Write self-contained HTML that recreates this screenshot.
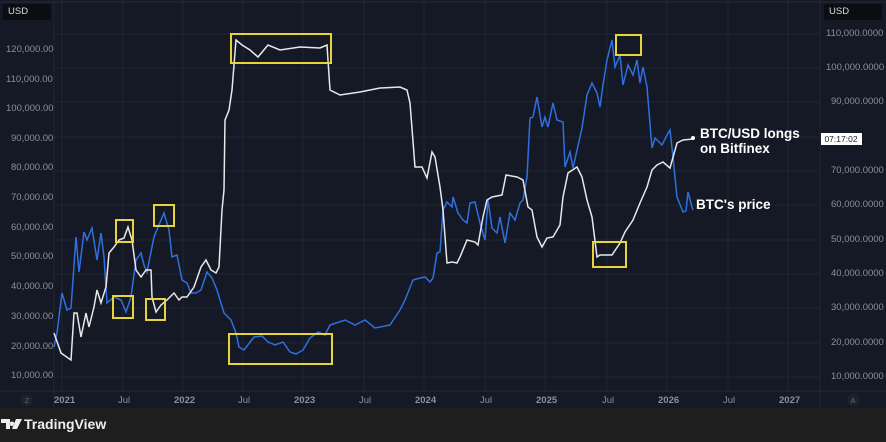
<!DOCTYPE html>
<html><head><style>
body{margin:0;width:886px;height:442px;overflow:hidden;background:#131722;font-family:"Liberation Sans",sans-serif;}
.wrap{position:relative;width:886px;height:442px;background:#141925}
.l{position:absolute;font-size:9.5px;color:#8c909b}
.foot{position:absolute;left:0;top:408px;width:886px;height:34px;background:#1e1e1e}
</style></head><body><div class="wrap">
<svg width="886" height="408" style="position:absolute;left:0;top:0">
<rect x="0" y="0" width="886" height="408" fill="#141925"/>
<g stroke="#1f2533" stroke-width="1">
<line x1="54" y1="0" x2="54" y2="408"/><line x1="820" y1="0" x2="820" y2="408"/>
<line x1="62" y1="0" x2="62" y2="391"/><line x1="123" y1="0" x2="123" y2="391"/><line x1="183" y1="0" x2="183" y2="391"/><line x1="243" y1="0" x2="243" y2="391"/><line x1="303" y1="0" x2="303" y2="391"/><line x1="364" y1="0" x2="364" y2="391"/><line x1="424" y1="0" x2="424" y2="391"/><line x1="485" y1="0" x2="485" y2="391"/><line x1="545" y1="0" x2="545" y2="391"/><line x1="607" y1="0" x2="607" y2="391"/><line x1="667" y1="0" x2="667" y2="391"/><line x1="728" y1="0" x2="728" y2="391"/><line x1="788" y1="0" x2="788" y2="391"/>
<line x1="54" y1="34" x2="820" y2="34"/><line x1="54" y1="68" x2="820" y2="68"/><line x1="54" y1="102" x2="820" y2="102"/><line x1="54" y1="137" x2="820" y2="137"/><line x1="54" y1="171" x2="820" y2="171"/><line x1="54" y1="205" x2="820" y2="205"/><line x1="54" y1="240" x2="820" y2="240"/><line x1="54" y1="274" x2="820" y2="274"/><line x1="54" y1="308" x2="820" y2="308"/><line x1="54" y1="343" x2="820" y2="343"/><line x1="54" y1="377" x2="820" y2="377"/>
<line x1="0" y1="391" x2="886" y2="391" stroke="#262b38"/>
<line x1="0" y1="2" x2="886" y2="2" stroke="#262b38"/>
</g>
<polyline fill="none" stroke="#2f6fe0" stroke-width="1.5" points="54,347 57,333 62,293 67,310 71,308 76,237 79,272 84,232 87,240 92,228 97,260 101,233 104,257 107,303 114,297 121,300 126,312 131,297 136,260 141,253 144,265 147,272 154,237 161,220 164,213 169,230 172,257 177,255 182,280 187,283 191,293 196,293 201,290 207,272 212,278 217,290 224,313 231,320 236,333 239,347 244,350 254,337 262,336 268,342 275,345 283,342 290,352 296,354 303,350 310,338 318,332 325,335 330,325 345,320 355,325 365,320 375,328 390,325 400,310 405,300 413,280 420,278 425,277 430,282 433,278 437,253 440,252 443,210 447,202 452,207 453,197 458,213 463,220 467,223 470,203 475,202 480,223 485,240 488,200 492,228 497,233 500,217 505,243 510,213 515,220 520,203 523,200 527,177 530,118 533,117 537,97 542,127 545,117 548,127 553,103 557,120 563,122 565,167 570,152 573,168 582,128 587,95 592,83 597,93 600,107 603,85 607,60 612,40 615,67 620,55 623,85 628,65 633,75 637,60 640,83 643,67 647,87 652,148 655,138 662,145 667,135 670,130 673,157 677,197 683,212 686,211 688,192 692,207 693,210"/>
<polyline fill="none" stroke="#e8e8ea" stroke-width="1.5" points="54,333 61,353 71,360 74,313 77,313 81,337 86,313 89,327 94,307 97,290 101,303 106,287 109,253 114,247 119,240 124,238 128,227 132,240 136,270 141,277 146,270 151,270 152,297 156,312 161,305 167,300 174,293 179,300 182,297 187,297 194,287 201,267 206,260 211,270 216,273 219,267 222,210 224,190 225,120 229,110 232,90 236,40 242,45 250,50 258,57 268,45 280,50 300,47 320,48 327,45 330,90 340,95 360,92 380,88 400,87 407,90 410,103 415,167 422,167 427,178 432,152 435,157 440,187 443,210 447,263 452,262 457,263 460,257 467,240 475,242 478,245 483,217 487,200 492,197 502,195 506,175 517,177 523,180 528,207 532,210 537,237 542,247 547,238 553,237 560,225 563,197 568,173 577,167 582,177 587,200 592,217 597,257 600,255 612,255 620,243 625,232 633,220 640,203 647,187 652,170 657,165 663,162 670,168 677,143 683,140 693,139"/>
<circle cx="693" cy="138" r="2" fill="#fff"/>
<g fill="none" stroke="#e8d43a" stroke-width="2">
<rect x="231" y="34" width="100" height="29"/><rect x="229" y="334" width="103" height="30"/>
<rect x="116" y="220" width="17" height="22"/><rect x="113" y="296" width="20" height="22"/>
<rect x="154" y="205" width="20" height="21"/><rect x="146" y="299" width="19" height="21"/>
<rect x="593" y="242" width="33" height="25"/><rect x="616" y="35" width="25" height="20"/>
</g>
<rect x="3" y="4" width="48" height="16" rx="2" fill="#0b0d12"/>
<rect x="824" y="4" width="58" height="16" rx="2" fill="#0b0d12"/>
<circle cx="27" cy="400" r="6" fill="#1e222b"/><circle cx="853" cy="400" r="6" fill="#1e222b"/>
<text x="27" y="403" font-size="7" fill="#666" text-anchor="middle">Z</text>
<text x="853" y="403" font-size="7" fill="#666" text-anchor="middle">A</text>
<rect x="821" y="133" width="41" height="12" fill="#fff"/>
<text x="841" y="142" font-size="8.5" fill="#222" text-anchor="middle" font-family="Liberation Sans">07:17:02</text>
</svg>
<div class="l" style="left:8px;top:6px;color:#ddd">USD</div>
<div class="l" style="left:829px;top:6px;color:#ddd">USD</div>
<div class="l" style="left:6px;top:44px">120,000.00</div>
<div class="l" style="left:6px;top:74px">110,000.00</div>
<div class="l" style="left:6px;top:103px">100,000.00</div>
<div class="l" style="left:11px;top:133px">90,000.00</div>
<div class="l" style="left:11px;top:162px">80,000.00</div>
<div class="l" style="left:11px;top:192px">70,000.00</div>
<div class="l" style="left:11px;top:222px">60,000.00</div>
<div class="l" style="left:11px;top:251px">50,000.00</div>
<div class="l" style="left:11px;top:281px">40,000.00</div>
<div class="l" style="left:11px;top:311px">30,000.00</div>
<div class="l" style="left:11px;top:341px">20,000.00</div>
<div class="l" style="left:11px;top:370px">10,000.00</div>
<div class="l" style="left:826px;top:28px">110,000.0000</div>
<div class="l" style="left:826px;top:62px">100,000.0000</div>
<div class="l" style="left:831px;top:96px">90,000.0000</div>
<div class="l" style="left:831px;top:165px">70,000.0000</div>
<div class="l" style="left:831px;top:199px">60,000.0000</div>
<div class="l" style="left:831px;top:234px">50,000.0000</div>
<div class="l" style="left:831px;top:268px">40,000.0000</div>
<div class="l" style="left:831px;top:302px">30,000.0000</div>
<div class="l" style="left:831px;top:337px">20,000.0000</div>
<div class="l" style="left:831px;top:371px">10,000.0000</div>
<div class="l" style="left:54px;top:395px;font-weight:bold">2021</div>
<div class="l" style="left:118px;top:395px">Jul</div>
<div class="l" style="left:174px;top:395px;font-weight:bold">2022</div>
<div class="l" style="left:238px;top:395px">Jul</div>
<div class="l" style="left:294px;top:395px;font-weight:bold">2023</div>
<div class="l" style="left:359px;top:395px">Jul</div>
<div class="l" style="left:415px;top:395px;font-weight:bold">2024</div>
<div class="l" style="left:480px;top:395px">Jul</div>
<div class="l" style="left:536px;top:395px;font-weight:bold">2025</div>
<div class="l" style="left:602px;top:395px">Jul</div>
<div class="l" style="left:658px;top:395px;font-weight:bold">2026</div>
<div class="l" style="left:723px;top:395px">Jul</div>
<div class="l" style="left:779px;top:395px;font-weight:bold">2027</div>
<div style="position:absolute;left:700px;top:126px;color:#fff;font-weight:bold;font-size:13.5px;line-height:15px">BTC/USD longs<br>on Bitfinex</div>
<div style="position:absolute;left:696px;top:197px;color:#fff;font-weight:bold;font-size:13.5px">BTC's price</div>
<div class="foot">
<svg width="24" height="14" style="position:absolute;left:1px;top:11px"><path d="M0 0H9V10H5V4H0Z M11 2.5a2.3 2.3 0 1 0 0.01 0Z M15 0H21L16 10H11Z" fill="#eee"/></svg>
<div style="position:absolute;left:24px;top:8px;color:#eee;font-weight:bold;font-size:14px">TradingView</div>
</div>
</div></body></html>
